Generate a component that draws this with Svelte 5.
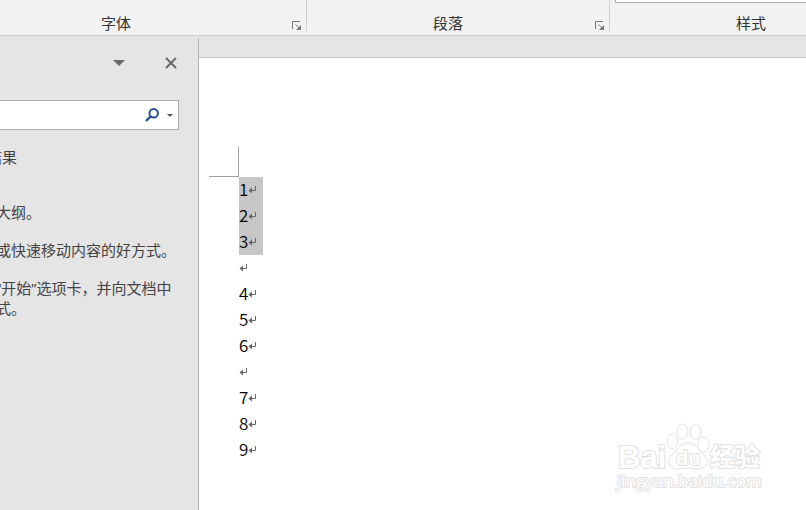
<script>
  const groups = [
    { name: 'font', label: '字体', launcher: true },
    { name: 'paragraph', label: '段落', launcher: true },
    { name: 'styles', label: '样式', launcher: false }
  ]

  const lines = [
    { text: '1', selected: true },
    { text: '2', selected: true },
    { text: '3', selected: true },
    { text: '' },
    { text: '4' },
    { text: '5' },
    { text: '6' },
    { text: '' },
    { text: '7' },
    { text: '8' },
    { text: '9' }
  ]

  let query = $state('')
</script>

<div class="word">
  <header class="ribbon">
    {#each groups as group}
      <section class="group {group.name}">
        {#if group.name === 'styles'}
          <div class="gallery"></div>
        {/if}
        <span class="label">{group.label}</span>
        {#if group.launcher}
          <button class="launcher" aria-label={group.label}>
            <svg width="10" height="10" viewBox="0 0 10 10" fill="none" stroke="#777">
              <path d="M0.5 8V0.5H8" />
              <path d="M3.5 3.5L7 7" />
              <path d="M9 4V9H4Z" fill="#777" stroke="none" />
            </svg>
          </button>
        {/if}
      </section>
    {/each}
  </header>

  <div class="workspace">
    <aside class="pane">
      <div class="paneHead">
        <button aria-label="选项">
          <svg width="12" height="6" viewBox="0 0 12 6"><path d="M0 0H12L6 6Z" fill="#6a6a6a" /></svg>
        </button>
        <button aria-label="关闭">
          <svg width="12" height="12" viewBox="0 0 12 12"><path d="M1 1L11 11M11 1L1 11" stroke="#6a6a6a" stroke-width="2" /></svg>
        </button>
      </div>

      <div class="search">
        <input type="text" aria-label="搜索" bind:value={query} />
        <button aria-label="搜索">
          <svg width="14" height="14" viewBox="0 0 14 14" fill="none" stroke="#2b4f8f">
            <circle cx="8.7" cy="5.2" r="4.2" stroke-width="2" />
            <path d="M5.5 8.5L1 13" stroke-width="2.4" />
          </svg>
        </button>
        <button aria-label="搜索选项">
          <svg width="6" height="3" viewBox="0 0 6 3"><path d="M0 0H6L3 3Z" fill="#555" /></svg>
        </button>
      </div>

      <div class="tab">结果</div>
      <div class="help">
        <p>大纲。</p>
        <p>或快速移动内容的好方式。</p>
        <p>“开始”选项卡，并向文档中<br />式。</p>
      </div>
    </aside>

    <main class="document">
      <div class="page">
        <div class="corner"></div>
        {#each lines as line}
          <p class="line" class:selected={line.selected}>
            <span>{line.text}</span>
            <svg width="8" height="8" viewBox="0 0 8 8" fill="none" stroke="#666">
              <path d="M7.5 0V4.5H1" />
              <path d="M4 1.5V7.5L0.5 4.5Z" fill="#666" stroke="none" />
            </svg>
          </p>
        {/each}
      </div>
    </main>
  </div>

  <svg class="watermark" width="150" height="72" viewBox="0 0 150 72">
    <text class="bai" x="4" y="46">Bai</text>
    <ellipse cx="58.5" cy="19.5" rx="5.5" ry="7.5" />
    <ellipse cx="68.5" cy="9.5" rx="5.5" ry="7.5" />
    <ellipse cx="81.5" cy="10" rx="5.5" ry="7.5" />
    <ellipse cx="89.5" cy="22.5" rx="5.5" ry="7.5" />
    <path d="M74 21C66 21 64 28 58 33C52 38 55 47 63 47C68 47 70 46 74 46C78 46 80 47 85 47C93 47 96 38 90 33C84 28 82 21 74 21Z" />
    <text class="du" x="62" y="43">du</text>
    <text class="jingyan" x="96" y="44">经验</text>
    <text class="site" x="3" y="65">jingyan.baidu.com</text>
  </svg>
</div>

<style>
  :global(body) {
    background: #fff;
    overflow: hidden;
  }
  .word {
    display: flex;
    flex-direction: column;
    height: 100vh;
    position: relative;
    overflow: hidden;
    font-family: "Open Sans", "Noto Sans CJK SC", sans-serif;
    font-size: 15px;
    color: #333;
  }
  button {
    display: flex;
    padding: 0;
    border: 0;
    background: none;
  }
  svg {
    display: block;
  }
  p {
    margin: 0;
  }

  .ribbon {
    display: grid;
    grid-template-columns: 307px 303px 1fr;
    height: 35px;
    background: #f2f2f2;
    border-bottom: 1px solid #cdcdcd;
  }
  .group {
    display: flex;
    align-items: flex-end;
    height: 31px;
    border-right: 1px solid #d0d0d0;
    box-sizing: border-box;
  }
  .font {
    margin-left: -54px;
  }
  .styles {
    flex-direction: column;
    align-items: stretch;
    justify-content: space-between;
    border-right: 0;
    margin-right: -86px;
  }
  .gallery {
    height: 2px;
    margin-left: 5px;
    background: #fff;
    border: 1px solid #ababab;
    border-top: 0;
  }
  .label {
    flex: 1;
    text-align: center;
    line-height: 16px;
  }
  .styles .label {
    flex: none;
  }
  .launcher {
    padding: 0 4px 0 6px;
  }

  .workspace {
    display: flex;
    flex: 1;
    min-height: 0;
    background: #e5e5e5;
  }
  .pane {
    width: 198px;
    flex: none;
    margin-top: 2px;
    border-right: 1px solid #b4b4b4;
    overflow: hidden;
    color: #444;
  }
  .paneHead {
    display: flex;
    justify-content: flex-end;
    align-items: center;
    gap: 40px;
    height: 50px;
    padding-right: 21px;
  }
  .search {
    display: flex;
    align-items: center;
    gap: 8px;
    height: 28px;
    margin: 12px 19px 0 -1px;
    padding-right: 5px;
    background: #fff;
    border: 1px solid #ababab;
  }
  .search input {
    flex: 1;
    min-width: 0;
    border: 0;
    outline: 0;
    background: none;
    font: inherit;
  }
  .tab {
    margin: 17px 0 0 -13px;
    line-height: 20px;
  }
  .help {
    margin: 35px 0 0 -4px;
    line-height: 20px;
    white-space: nowrap;
  }
  .help p {
    margin-bottom: 18px;
  }

  .document {
    flex: 1;
    min-width: 0;
    margin-top: 21px;
    border-top: 1px solid #c3c3c3;
    background: #fff;
  }
  .page {
    padding: 89px 10px 0;
    font-family: "Noto Sans CJK SC", sans-serif;
    font-size: 17px;
    font-weight: 350;
    color: #000;
  }
  .corner {
    width: 29px;
    height: 29px;
    border-right: 1px solid #a0a0a0;
    border-bottom: 1px solid #a0a0a0;
  }
  .line {
    display: flex;
    align-items: center;
    width: 24px;
    height: 26px;
    margin-left: 30px;
    line-height: 24px;
  }
  .line span {
    padding-bottom: 2px;
  }
  .selected {
    background: #c6c6c6;
  }

  .watermark {
    position: absolute;
    right: 42px;
    bottom: 16px;
    fill: #fff;
    stroke: #e2e2e2;
  }
  .watermark text {
    paint-order: stroke;
    stroke-width: 2;
  }
  .bai {
    font: bold 31px "Liberation Sans", sans-serif;
  }
  .du {
    font: bold 20px "Liberation Sans", sans-serif;
  }
  .jingyan {
    font: bold 25px "Noto Sans CJK SC", sans-serif;
  }
  .site {
    font: 17px "Open Sans", sans-serif;
  }
</style>
